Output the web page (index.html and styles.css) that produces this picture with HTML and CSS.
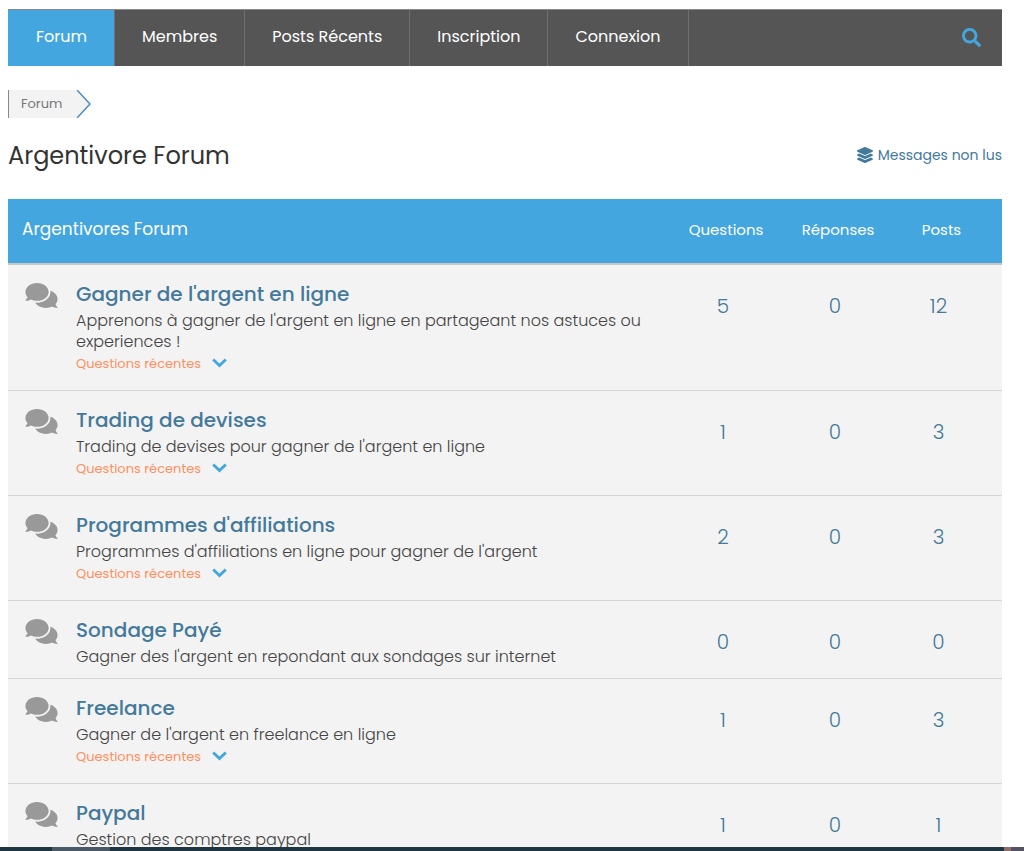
FILE: index.html
```html
<!DOCTYPE html>
<html lang="fr">
<head>
<meta charset="utf-8">
<meta name="viewport" content="width=device-width, initial-scale=1">
<title>Argentivore Forum</title>
<link rel="stylesheet" href="styles.css">
</head>
<body>
<svg class="sprite" aria-hidden="true">
  <symbol id="search" viewBox="0 0 512 512"><path d="M505 442.7L405.3 343c-4.5-4.5-10.6-7-17-7H372c27.6-35.3 44-79.7 44-128C416 93.1 322.9 0 208 0S0 93.1 0 208s93.1 208 208 208c48.3 0 92.7-16.4 128-44v16.3c0 6.4 2.5 12.5 7 17l99.7 99.7c9.4 9.4 24.6 9.4 33.9 0l28.3-28.3c9.4-9.4 9.4-24.6.1-34zM208 336c-70.7 0-128-57.2-128-128 0-70.7 57.2-128 128-128 70.7 0 128 57.2 128 128 0 70.7-57.2 128-128 128z"/></symbol>
  <symbol id="layers" viewBox="0 0 512 512"><path d="M12.41 148.02l232.94 105.67c6.8 3.09 14.49 3.09 21.29 0l232.94-105.67c16.55-7.51 16.55-32.52 0-40.03L266.65 2.31a25.607 25.607 0 0 0-21.29 0L12.41 107.98c-16.55 7.51-16.55 32.53 0 40.04zm487.18 88.28l-58.09-26.33-161.64 73.27c-7.56 3.43-15.59 5.17-23.86 5.17s-16.29-1.74-23.86-5.17L70.51 209.97l-58.1 26.33c-16.55 7.5-16.55 32.5 0 40l232.94 105.59c6.8 3.08 14.49 3.08 21.29 0L499.59 276.3c16.55-7.5 16.55-32.5 0-40zm0 127.8l-57.87-26.23-161.86 73.37c-7.56 3.43-15.59 5.17-23.86 5.17s-16.29-1.74-23.86-5.17L70.29 337.87 12.41 364.1c-16.55 7.5-16.55 32.5 0 40l232.94 105.59c6.8 3.08 14.49 3.08 21.29 0L499.59 404.1c16.55-7.5 16.55-32.5 0-40z"/></symbol>
  <symbol id="comments" viewBox="0 32 576 448"><path d="M416 192c0-88.4-93.1-160-208-160S0 103.6 0 192c0 34.3 14.1 65.9 38 92-13.4 30.2-35.5 54.2-35.8 54.5-2.2 2.3-2.8 5.7-1.5 8.7S4.8 352 8 352c36.6 0 66.9-12.3 88.7-25 32.2 15.7 70.3 25 111.3 25 114.9 0 208-71.6 208-160zm122 220c23.9-26 38-57.7 38-92 0-66.9-53.5-124.2-129.3-148.1.9 6.6 1.3 13.3 1.3 20.1 0 105.9-107.7 192-240 192-10.8 0-21.3-.8-31.7-1.9C207.8 439.6 281.8 480 368 480c41 0 79.1-9.2 111.3-25 21.8 12.7 52.1 25 88.7 25 3.2 0 6.1-1.9 7.3-4.8 1.3-2.9.7-6.3-1.5-8.7-.3-.3-22.4-24.2-35.8-54.5z"/></symbol>
  <symbol id="chevron" viewBox="0 0 15 10"><path d="M1.2 1.4L7.5 7.6L13.8 1.4" fill="none" stroke="currentColor" stroke-width="2.8"/></symbol>
</svg>
<div class="page">
  <nav class="menu" aria-label="Menu du forum">
    <a class="menu-item active" href="#">Forum</a>
    <a class="menu-item" href="#">Membres</a>
    <a class="menu-item" href="#">Posts Récents</a>
    <a class="menu-item" href="#">Inscription</a>
    <a class="menu-item" href="#">Connexion</a>
    <button class="search" type="button" aria-label="Rechercher"><svg class="icon-search"><use href="#search"/></svg></button>
  </nav>

  <nav class="crumbs" aria-label="Fil d'Ariane">
    <a class="crumb" href="#">Forum</a>
    <svg class="crumb-arrow" viewBox="0 0 17 28" aria-hidden="true"><path class="crumb-fill" d="M0 0H2L15 14L2 28H0Z"/><path class="crumb-line" d="M2 0L15 14L2 28"/></svg>
  </nav>

  <header class="heading">
    <h1 class="title">Argentivore Forum</h1>
    <a class="unread" href="#"><svg class="icon-layers" aria-hidden="true"><use href="#layers"/></svg>Messages non lus</a>
  </header>

  <table class="forums">
    <thead>
      <tr>
        <th class="name-head" colspan="2" scope="col">Argentivores Forum</th>
        <th class="count-head col-wide" scope="col">Questions</th>
        <th class="count-head col-wide" scope="col">Réponses</th>
        <th class="count-head col-posts" scope="col">Posts</th>
      </tr>
    </thead>
    <tbody>
      <tr>
        <td class="mark"><svg class="icon-comments" aria-hidden="true"><use href="#comments"/></svg></td>
        <td class="info"><h2 class="name"><a href="#">Gagner de l'argent en ligne</a></h2><p class="desc">Apprenons à gagner de l'argent en ligne en partageant nos astuces ou experiences !</p><button class="recent" type="button">Questions récentes<svg class="icon-chevron" aria-hidden="true"><use href="#chevron"/></svg></button></td>
        <td class="count">5</td><td class="count">0</td><td class="count col-posts">12</td>
      </tr>
      <tr>
        <td class="mark"><svg class="icon-comments" aria-hidden="true"><use href="#comments"/></svg></td>
        <td class="info"><h2 class="name"><a href="#">Trading de devises</a></h2><p class="desc">Trading de devises pour gagner de l'argent en ligne</p><button class="recent" type="button">Questions récentes<svg class="icon-chevron" aria-hidden="true"><use href="#chevron"/></svg></button></td>
        <td class="count">1</td><td class="count">0</td><td class="count col-posts">3</td>
      </tr>
      <tr>
        <td class="mark"><svg class="icon-comments" aria-hidden="true"><use href="#comments"/></svg></td>
        <td class="info"><h2 class="name"><a href="#">Programmes d'affiliations</a></h2><p class="desc">Programmes d'affiliations en ligne pour gagner de l'argent</p><button class="recent" type="button">Questions récentes<svg class="icon-chevron" aria-hidden="true"><use href="#chevron"/></svg></button></td>
        <td class="count">2</td><td class="count">0</td><td class="count col-posts">3</td>
      </tr>
      <tr>
        <td class="mark"><svg class="icon-comments" aria-hidden="true"><use href="#comments"/></svg></td>
        <td class="info"><h2 class="name"><a href="#">Sondage Payé</a></h2><p class="desc">Gagner des l'argent en repondant aux sondages sur internet</p></td>
        <td class="count">0</td><td class="count">0</td><td class="count col-posts">0</td>
      </tr>
      <tr>
        <td class="mark"><svg class="icon-comments" aria-hidden="true"><use href="#comments"/></svg></td>
        <td class="info"><h2 class="name"><a href="#">Freelance</a></h2><p class="desc">Gagner de l'argent en freelance en ligne</p><button class="recent" type="button">Questions récentes<svg class="icon-chevron" aria-hidden="true"><use href="#chevron"/></svg></button></td>
        <td class="count">1</td><td class="count">0</td><td class="count col-posts">3</td>
      </tr>
      <tr>
        <td class="mark"><svg class="icon-comments" aria-hidden="true"><use href="#comments"/></svg></td>
        <td class="info"><h2 class="name"><a href="#">Paypal</a></h2><p class="desc">Gestion des comptres paypal</p></td>
        <td class="count">1</td><td class="count">0</td><td class="count col-posts">1</td>
      </tr>
    </tbody>
  </table>
</div>
<div class="taskbar" aria-hidden="true"><span class="task"></span><span class="tray"></span></div>
</body>
</html>
```
FILE: styles.css
```css
* { box-sizing: border-box; }

body {
  margin: 0;
  height: 100vh;
  overflow: hidden;
  background: #fff;
  color: #444;
  font-family: Poppins, Inter, "Open Sans", sans-serif;
  font-size: 16px;
}

a { color: inherit; text-decoration: none; }
button { border: 0; padding: 0; background: none; font: inherit; cursor: pointer; }
svg { display: block; flex: none; fill: currentColor; }

.sprite { position: absolute; width: 0; height: 0; }
.page { padding: 9px 22px 0 8px; }

.menu {
  display: flex;
  height: 57px;
  background: #555;
  border-top: 1px solid #888;
  color: #fff;
}
.menu-item {
  padding: 0 27px;
  border-right: 1px solid #736d6d;
  line-height: 54px;
  white-space: nowrap;
}
.menu-item.active { padding-left: 28px; background: #43a6df; }
.search { margin-left: auto; padding: 0 21px 2px; color: #43a6df; }
.icon-search { width: 19px; height: 19px; }

.crumbs { display: flex; height: 28px; margin-top: 24px; }
.crumb {
  padding: 0 13px 0 12px;
  border-left: 1px solid #888;
  background: #f3f3f3;
  color: #777;
  font-size: 13px;
  line-height: 27px;
}
.crumb-arrow { width: 17px; height: 28px; }
.crumb-fill { fill: #f3f3f3; }
.crumb-line { fill: none; stroke: #4a8fc0; stroke-width: 1.5; }

.heading {
  display: flex;
  align-items: center;
  justify-content: space-between;
  height: 36px;
  margin: 19px 0 26px;
}
.title { margin: 0; color: #333; font-size: 24px; font-weight: 400; }
.unread { display: flex; align-items: center; gap: 5px; color: #43799b; font-size: 14px; }
.icon-layers { width: 16px; height: 16px; }

.forums { width: 100%; border-collapse: collapse; background: #f3f3f3; }
.forums thead { background: #43a6df; color: #fff; border-bottom: 2px solid #c8c8c8; }
.forums th { height: 65px; padding: 0 0 4px; font-weight: 400; }
.forums th.name-head { padding-left: 14px; text-align: left; font-size: 17px; }
.forums th.count-head { padding-left: 6px; font-size: 15px; }
.forums td { padding: 0; vertical-align: top; }
.forums tbody tr { border-bottom: 1px solid #d4d4d4; }
.forums .col-wide { width: 112px; }
.forums .col-posts { width: 111px; padding-right: 16px; }

.forums .mark { width: 68px; padding: 18px 0 0 17px; color: #999; }
.icon-comments { width: 33px; height: 25px; }
.forums .info { padding: 16px 20px 11px 0; }
.name { margin: 0; color: #43799b; font-size: 20px; font-weight: 500; line-height: 26px; }
.desc { margin: 0; padding-top: 3px; font-weight: 300; line-height: 21px; }
.recent {
  display: flex;
  align-items: center;
  gap: 11px;
  margin-bottom: 3px;
  color: #ff8f5f;
  font-size: 13px;
  line-height: 24px;
}
.icon-chevron { width: 15px; height: 10px; margin-bottom: 3px; color: #43a6df; }
.forums .count { padding-top: 27px; color: #43799b; font-size: 20px; font-weight: 300; line-height: 28px; text-align: center; }

.taskbar {
  position: fixed;
  inset: auto 0 0;
  display: flex;
  justify-content: space-between;
  height: 4px;
  padding-left: 52px;
  background: #203542;
}
.task { width: 58px; background: #4b5966; }
.tray { width: 20px; background: #555362; border-left: 7px solid #8a6f6c; }
```
